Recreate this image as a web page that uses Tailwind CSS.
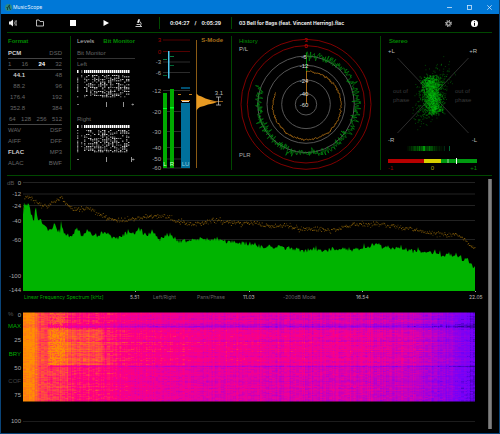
<!DOCTYPE html>
<html lang="en">
<head>
<meta charset="utf-8">
<meta name="viewport" content="width=device-width, initial-scale=1">
<title>MusicScope</title>
<script src="https://cdn.jsdelivr.net/npm/@tailwindcss/browser@4"></script>
</head>
<body class="bg-black">
<div class="min-h-screen flex flex-col border border-t-0 border-[#0a4478] bg-black font-[Inter,'Liberation_Sans',sans-serif] text-[5px] leading-[11px] text-[#666]">
  <header class="flex items-center h-3.5 bg-[#0078d7] text-white pl-1">
    <svg class="size-[7px] mr-[1px]" viewBox="0 0 14 14"><circle cx="7" cy="7" r="7" fill="#2b8a86"/><path d="M5 12V8L3 6M5 8l3-5 1 5 2 4M8 3l2-1" fill="none" stroke="#10302c" stroke-width="1.6"/></svg>
    <h1 class="flex-1 text-[#e4f1fc]">MusicScope</h1>
    <div class="flex items-center gap-[15px] pr-[7px]">
      <button aria-label="Minimize"><svg class="w-[5px] h-[5px] block" viewBox="0 0 5 5"><path d="M0 2.5h5" stroke="#cfe6fa" stroke-width=".8"/></svg></button>
      <button aria-label="Maximize"><svg class="w-[5px] h-[5px] block" viewBox="0 0 5 5"><rect x=".5" y=".5" width="4" height="4" fill="none" stroke="#cfe6fa" stroke-width=".8"/></svg></button>
      <button aria-label="Close"><svg class="w-[5px] h-[5px] block" viewBox="0 0 5 5"><path d="M.3.3l4.4 4.4M4.7.3L.3 4.7" stroke="#cfe6fa" stroke-width=".8"/></svg></button>
    </div>
  </header>

  <nav class="flex items-center h-[19px] ml-1.5 mr-[7px] pr-3.5 border-b border-[#004800] font-bold text-[#eee]">
    <div class="flex items-center gap-[25px] pl-0.5">
      <button class="-mr-1.5" aria-label="Volume"><svg class="w-2 h-2 block" viewBox="0 0 16 16"><path d="M0 5h3l5-4v14l-5-4H0z" fill="#eee"/><path d="M10 5q2 3 0 6M12 3q4 5 0 10M14 2q5 6 0 12" fill="none" stroke="#ccc" stroke-width="1.3"/></svg></button>
      <button aria-label="Open file"><svg class="w-2 h-2 block" viewBox="0 0 16 16"><path d="M1 2h5l2 3h7v9H1z" fill="none" stroke="#ccc" stroke-width="1.8"/></svg></button>
      <button aria-label="Stop"><svg class="w-2 h-2 block" viewBox="0 0 16 16"><path d="M2 2h12v12H2z" fill="#fff"/></svg></button>
      <button aria-label="Play"><svg class="w-2 h-2 block" viewBox="0 0 16 16"><path d="M3 2l11 6-11 6z" fill="#fff"/></svg></button>
      <button aria-label="Analyze"><svg class="w-2 h-2 block" viewBox="0 0 16 16"><path d="M7 0l3 1-2 7-4-1z" fill="#eee"/><path d="M1 15h13M3 11h7M10 5q4 3 1 9" fill="none" stroke="#ddd" stroke-width="1.8"/></svg></button>
    </div>
    <div class="flex items-center justify-center gap-[5px] h-3 w-[73px] ml-[16px] border-x border-[#004a00]"><span>0:04:27</span><span>/</span><span>0:05:29</span></div>
    <p class="flex-1 pl-[7px]">03 Bell for Bags (feat. Vincent Herring).flac</p>
    <div class="flex items-center gap-[19px]">
      <button aria-label="Settings"><svg class="w-[7px] h-[7px] block" viewBox="0 0 14 14"><circle cx="7" cy="7" r="3.6" fill="none" stroke="#ccc" stroke-width="2.2"/><circle cx="7" cy="7" r="5.7" fill="none" stroke="#ccc" stroke-width="2.4" stroke-dasharray="2.2 2.28"/></svg></button>
      <button aria-label="Info"><svg class="w-[7px] h-[7px] block" viewBox="0 0 14 14"><circle cx="7" cy="7" r="7" fill="#fff"/><path d="M7 2.5v2M7 6v5.5" stroke="#000" stroke-width="2"/></svg></button>
    </div>
  </nav>

  <main class="flex-1 flex flex-col">
    <section class="grid grid-cols-[63fr_82fr_79fr_149fr_112fr] ml-1.5 mr-[7px] pt-[3px] pb-[5px] border-b border-[#004800] font-['Liberation_Sans',Arial,sans-serif] text-[6px] [&>*]:border-[#004800] [&>*]:min-w-0">
      <div class="pl-px pr-2">
        <h2 class="font-bold text-[#008a00]">Format</h2>
        <div class="flex justify-between pt-px border-b border-[#444] leading-[10px]"><b class="text-[#ccc]">PCM</b><span>DSD</span></div>
        <div class="flex justify-between border-b border-[#444] leading-[10px]"><span>1</span><span>16</span><b class="text-white">24</b><span>32</span></div>
        <div class="flex justify-between"><b class="w-[17px] text-right text-[#ccc]">44.1</b><span>48</span></div>
        <div class="flex justify-between"><span class="w-[17px] text-right">88.2</span><span>96</span></div>
        <div class="flex justify-between"><span class="w-[17px] text-right">176.4</span><span>192</span></div>
        <div class="flex justify-between"><span class="w-[17px] text-right">352.8</span><span>384</span></div>
        <div class="flex justify-between border-b border-[#444] pl-px leading-[10px]"><span>64</span><span>128</span><span>256</span><span>512</span></div>
        <div class="flex justify-between"><span>WAV</span><span>DSF</span></div>
        <div class="flex justify-between"><span>AIFF</span><span>DFF</span></div>
        <div class="flex justify-between"><b class="text-[#ccc]">FLAC</b><span>MP3</span></div>
        <div class="flex justify-between"><span>ALAC</span><span>BWF</span></div>
      </div>

      <div class="border-l pl-1.5 pr-[17px]">
        <div class="flex justify-between whitespace-nowrap"><button class="text-[#bbb]">Levels</button><button class="font-bold text-[#008a00]">Bit Monitor</button></div>
        <h2 class="pt-px border-b border-[#333] leading-[10px]">Bit Monitor</h2>
        <h3>Left</h3>
        <svg id="bitsL" class="w-full block" viewBox="0 0 58 28"></svg>
        <svg class="w-full block" viewBox="0 0 58 16"><path d="M0 6.5h2M54.500 6.500h2.500M55.700 5.500v2" stroke="#999" stroke-width=".8"/><path d="M29.500 4v5M46.500 4v5" stroke="#bbb" stroke-width=".8"/></svg>
        <h3>Right</h3>
        <svg id="bitsR" class="w-full block" viewBox="0 0 58 28"></svg>
        <svg class="w-full block" viewBox="0 0 58 12"><path d="M0 6.500h2M55 6.500h2.500M56.200 5.500v2" stroke="#999" stroke-width=".8"/><path d="M29.500 4v5M54.500 4v5" stroke="#bbb" stroke-width=".8"/></svg>
      </div>

      <svg id="meter" class="w-full block" viewBox="152 36 79 134" role="img" aria-label="Level meters"></svg>
      <div class="border-l"><svg id="history" class="w-full block" viewBox="232 36 148 134" role="img" aria-label="History"></svg></div>
      <div class="border-l"><svg id="stereo" class="w-full block" viewBox="381 36 111 134" role="img" aria-label="Stereo"></svg></div>
    </section>

    <section class="flex-1 flex gap-1 pr-[7px] pt-[3px] pb-1">
      <div class="flex-1 min-w-0">
        <svg id="spectrum" class="w-full block font-['Liberation_Sans',Arial,sans-serif] text-[6px]" viewBox="1 179 483 113" role="img" aria-label="Frequency spectrum"></svg>
        <div class="grid grid-cols-[106fr_23fr_44fr_46fr_40fr_73fr_113fr_15fr] pl-[23px] whitespace-nowrap text-left text-[#bbb]">
          <button class="text-left text-[#00a800]">Linear Frequency Spectrum [kHz]</button><span>5.51</span>
          <button class="text-left text-[#666]">Left/Right</button>
          <button class="text-left text-[#666]">Pans/Phase</button><span>11.03</span>
          <button class="text-left text-[#666]">-200dB Mode</button><span>16.54</span><span>22.05</span>
        </div>
        <div class="grid grid-cols-[22fr_452fr_9fr] pt-[9px]">
          <svg id="scale" class="w-full block font-['Liberation_Sans',Arial,sans-serif] text-[6px]" viewBox="1 312 22 114"></svg>
          <div class="flex flex-col">
            <canvas id="gram" width="452" height="90" class="w-full h-[90px] block"></canvas>
            <div class="h-5 border-b border-[#1c1c1c]"></div>
          </div>
        </div>
      </div>
      <div class="w-1 bg-[#808080] border-x border-[#666]" role="scrollbar" aria-controls="spectrum" aria-valuenow="0"></div>
    </section>
  </main>
</div>

<script>
let seed = 7;
const rnd = () => (seed = (seed * 16807) % 2147483647) / 2147483647;
const gauss = () => rnd() + rnd() + rnd() + rnd() - 2;
const $ = id => document.getElementById(id);
const text = (x, y, s, fill, anchor = 'start', extra = '') => `<text x="${x}" y="${y + 2}" fill="${fill}" text-anchor="${anchor}" ${extra}>${s}</text>`;
const rect = (x, y, w, h, fill) => `<rect x="${x}" y="${y}" width="${w}" height="${h}" fill="${fill}"/>`;
const bold = 'font-weight="bold"';

// Bit monitors: a solid header row, then active bits
for (const id of ['bitsL', 'bitsR']) {
  let s = rect(0, 0, 1.5, 3, '#fff') + rect(4, 0, 1.5, 3, '#555');
  for (let i = 0; i < 23; i++) s += rect(7 + i * 2, 0, 1.5, 3, '#fff');
  for (let r = 0; r < 17; r++) {
    if (rnd() > .4) s += rect(0, 5 + r * 1.33, 1.3, 1, '#999');
    if (rnd() > .8) s += rect(4, 5 + r * 1.33, 1.3, 1, '#777');
    for (let i = 0; i < 23; i++) if (rnd() > (i < 3 ? .65 : .45)) s += rect(7 + i * 2, 5 + r * 1.33, 1.4, 1, rnd() > .5 ? '#ccc' : '#777');
  }
  $(id).innerHTML = s;
}

// Level meters
{
  let s = '';
  [['3', 40], ['0', 51.5], ['-3', 62], ['-6', 72.5], ['-12', 90.5], ['-20', 111.5], ['-30', 131.5], ['-40', 147.5], ['-50', 159], ['-60', 168]].forEach(([t, y], i) => {
    s += rect(163, y - .5, 27, 1, i < 2 ? '#500' : '#2c2c2c') + text(161, y, t, i < 2 ? '#a00000' : '#aaa', 'end');
  });
  s += rect(163, 93, 4, 75, '#0a0') + rect(170, 89, 4, 79, '#0a0') + rect(163, 108, 4, 1, '#0f2') + rect(170, 107, 4, 1.5, '#0f2');
  s += rect(181, 103, 9, 65, '#00709c') + rect(181, 87, 9, 2, '#004f70') + rect(181, 100, 9, 1, '#e09020') + rect(182, 101, 7, 1, '#ddd');
  s += rect(178, 94, 3, 1, '#c07818') + rect(189, 94, 3, 1, '#c07818');
  s += rect(163, 59, 4, 1, '#0a7a40') + rect(163, 75, 4, 1, '#063') + rect(170, 56, 4, 1, '#0a7a40') + rect(170, 65, 4, 1, '#063');
  s += rect(168, 51, 1.5, 27.5, '#4cc8f0');
  s += text(165, 164, 'L', '#cfc', 'middle') + text(172, 164, 'R', '#cfc', 'middle') + text(185.5, 164, 'LU', '#9cd', 'middle');
  s += rect(196, 40, 1, 128, '#8a5a14') + text(223, 40, 'S-Mode', '#a8701c', 'end', bold);
  s += '<path d="M196.500 93.500l2 2 3 1 4 2 5 1.500 4 1 2.500 1-4 1.500-5 1-4 1.500-4 1-2 1.500-1.500 2z" fill="#e89a22"/>' + rect(210, 101, 13, .8, '#b07020');
  s += '<path d="M216 97h5M218.500 97v8M216 105h5" stroke="#bbb" stroke-width=".8"/>' + text(219, 93, '3.1', '#bbb', 'middle');
  $('meter').innerHTML = s;
}

// Polar loudness history
{
  const cx = 306, cy = 104.3;
  let s = '';
  [[65, '#900000'], [58.7, '#900000'], [48.3, '#606060'], [39, '#606060'], [24.3, '#606060'], [10.7, '#606060']].forEach(([r, c]) => s += `<circle cx="${cx}" cy="${cy}" r="${r}" fill="none" stroke="${c}" stroke-width=".9"/>`);
  const trace = (n, f) => { let p = ''; for (let i = 0; i <= n; i++) { const a = i / n * 5.08, r = f(a); p += `${i ? 'L' : 'M'}${(cx + r * Math.sin(a)).toFixed(1)} ${(cy - r * Math.cos(a)).toFixed(1)}`; } return p; };
  s += `<path d="${trace(400, a => 49.5 + Math.sin(a) * 1.5 + gauss() * 3.6 - (rnd() > .95 ? 4 : 0))}" fill="none" stroke="#009a10" stroke-width=".6"/>`;
  s += `<path d="${trace(190, a => 34 + Math.sin(a) * 1 - Math.cos(a) * 1.3 + gauss() * .9)}" fill="none" stroke="#b87414" stroke-width=".8"/>`;
  s += '<path d="M306.500 104V71" stroke="#b87414" stroke-width=".9"/><path d="M306.500 71V53" stroke="#009a10" stroke-width=".9"/>';
  [['3', 40, '#d00'], ['0', 46, '#d00'], ['-6', 56.5], ['-12', 66], ['-24', 80.500], ['-40', 94], ['-60', 104.500]].forEach(([t, y, c]) => s += text(t.length > 1 ? 304 : 306, y, t, c || '#ddd', 'middle'));
  s += text(239, 41, 'History', '#009000') + text(239, 49, 'P/L', '#bbb') + text(239, 155, 'PLR', '#aaa');
  $('history').innerHTML = s;
}

// Goniometer, balance and correlation
{
  let s = '<path d="M397.500 58l71 75M468.500 58l-71 75" stroke="#3a3a3a" stroke-width=".8"/>';
  s += text(389, 41, 'Stereo', '#008a00', 'start', bold) + text(388, 51, '+L', '#bbb') + text(477, 51, '+R', '#bbb', 'end') + text(388, 140, '-R', '#bbb') + text(477, 140, '-L', '#bbb', 'end');
  s += text(393, 91, 'out of', '#3a3a3a') + text(393, 100, 'phase', '#3a3a3a') + text(455, 91, 'out of', '#3a3a3a') + text(455, 100, 'phase', '#3a3a3a');
  for (let i = 0; i < 1300; i++) {
    const t = rnd() * 2 - 1, x = 432 + t * 2 + gauss() * 7.5, y = 95 + t * 17 + gauss() * 4;
    s += rect(x.toFixed(1), y.toFixed(1), 1, 1, `rgba(0,${140 + (rnd() * 90 | 0)},${rnd() * 30 | 0},.55)`);
  }
  for (let i = 0; i < 500; i++) {
    const t = gauss();
    s += rect((432 - t * 8 + gauss() * 12).toFixed(1), (95 + t * 23 + gauss() * 9).toFixed(1), .9, .9, 'rgba(0,130,10,.6)');
  }
  for (let x = 407; x < 444; x++) s += rect(x, 146, .8, 5, `rgba(0,200,10,${(Math.max(.05, 1 - Math.abs(x - 424) / 19) * (.4 + rnd() * .6)).toFixed(2)})`);
  s += rect(449, 146, 1, 5, '#063') + rect(444, 146, .6, 5, '#042');
  s += rect(388, 159, 36, 4, '#b80000') + rect(424, 159, 17, 4, '#d8d000') + rect(441, 159, 36, 4, '#009a10') + rect(447, 159, 2, 4, '#50b858') + rect(456, 158, 1, 6, '#fff');
  s += text(388, 167.500, '-1', '#a00000') + text(432.500, 167.500, '0', '#b0a800', 'middle') + text(477, 167.500, '+1', '#008a00', 'end');
  $('stereo').innerHTML = s;
}

// Spectrum: current envelope and peak trace
const lerp = (pts, x) => { let i = 1; while (i < pts.length - 1 && pts[i][0] < x) i++; const [a, b] = pts[i - 1], [c, d] = pts[i]; return b + (d - b) * (x - a) / (c - a); };
{
  const env = [[23,213],[24,203],[26,204],[29,206],[31,212],[34,221],[36,208],[38,222],[40,219],[45,226],[50,231],[54,225],[60,232],[61,224],[65,234],[72,236],[76,229],[82,235],[88,231],[95,235],[106,232],[112,237],[119,239],[127,233],[141,231],[147,236],[153,232],[160,240],[165,236],[172,236],[174,240],[185,240],[205,239],[225,241],[245,244],[265,247],[282,247],[298,251],[315,250],[330,250],[350,250],[363,248],[378,244],[384,248],[403,249],[427,252],[443,255],[457,255],[463,259],[470,262],[475,269]];
  const peak = [[23,210],[25,195],[30,199],[35,201],[42,205],[48,206],[55,200],[61,197],[66,204],[72,208],[80,210],[88,206],[95,212],[105,217],[115,220],[130,219],[140,217],[155,216],[164,215],[175,220],[190,224],[200,223],[215,220],[235,223],[250,223],[270,226],[285,225],[300,229],[320,228],[330,230],[345,226],[360,224],[375,224],[395,226],[412,229],[430,232],[445,234],[457,234],[465,240],[470,245],[475,249]];
  let s = text(7, 183, 'dB', '#555');
  [['0', 182.500], ['-12', 194], ['-24', 205.500], ['-40', 220.500], ['-60', 239.500], ['-100', 275.500], ['-144', 290]].forEach(([t, y]) => {
    s += text(21, y, t, '#aaa', 'end');
    if (y < 270) s += rect(23, y - .5, 452, 1, '#222');
  });
  let p = 'M23 291';
  for (let x = 23; x <= 475; x += 1) p += `L${x} ${(lerp(env, x) + gauss() * 2.4 - (rnd() > .9 ? 2.5 : 0)).toFixed(1)}`;
  s += `<path d="${p}L475 291z" fill="#00b400"/>`;
  for (let x = 23; x < 475; x += .7) s += rect(x.toFixed(1), (lerp(peak, x) + gauss() * 2.2).toFixed(1), .9, .9, rnd() > .5 ? '#96690a' : '#604406');
  [135, 249, 362, 475].forEach(x => s += rect(x, 291, 1, 1, '#aaa'));
  $('spectrum').innerHTML = s;
}

// Spectrogram scale and image
$('scale').innerHTML = text(8, 314, '%', '#555') + [['0', 314.500], ['25', 340], ['50', 367.500], ['75', 395], ['100', 421]].map(([t, y]) => text(21, y, t, '#aaa', 'end')).join('') + text(21, 326, 'MAX', '#0a0', 'end') + text(21, 353.500, 'BRY', '#0a0', 'end') + text(21, 381, 'COF', '#444', 'end');
{
  const W = 452, H = 90, ctx = $('gram').getContext('2d'), img = ctx.createImageData(W, H);
  const stops = [[0, [50, 0, 150]], [.12, [115, 0, 250]], [.3, [175, 0, 210]], [.5, [235, 0, 155]], [.62, [255, 0, 125]], [.78, [255, 70, 70]], [1, [255, 145, 0]]];
  const color = v => { v = Math.max(0, Math.min(1, v)); let i = 1; while (stops[i][0] < v) i++; const [a, ca] = stops[i - 1], [b, cb] = stops[i]; return ca.map((c, k) => c + (cb[k] - c) * (v - a) / (b - a)); };
  const level = [[0, 1], [10, .96], [16, .8], [28, .73], [38, .76], [50, .69], [85, .63], [110, .56], [160, .51], [230, .49], [300, .46], [340, .46], [390, .38], [420, .25], [438, .15], [452, .08]];
  const col = Array.from({ length: W }, () => gauss() * .045);
  for (let y = 0; y < H; y++) {
    const loud = y > 16 && y < 53;
    let row = gauss() * .05 + (loud ? .05 : -.02) + (y > 11 && y < 16 ? -.12 : 0) + (y === 17 ? -.06 : 0) + (y === 54 ? -.08 : 0), run = 0;
    for (let x = 0; x < W; x++) {
      const fade = x < 25 ? .3 : x > 400 ? 1 - (x - 400) / 90 : 1;
      if (x % 3 === 0) run = gauss() * .055;
      let v = lerp(level, x) + row * fade + (col[x] + run) * (x > 400 ? fade : 1);
      if (x > 24 && x < 80 && loud) v += .08;
      if (x > 26 && x < 42 && y < 53 && rnd() > .5) v += .1;
      const c = color(v), i = (y * W + x) * 4, d = y === 0 || y === H - 1 ? .5 : 1;
      img.data[i] = c[0] * d; img.data[i + 1] = c[1] * d; img.data[i + 2] = c[2] * d; img.data[i + 3] = 255;
    }
  }
  ctx.putImageData(img, 0, 0);
}
</script>
</body>
</html>
